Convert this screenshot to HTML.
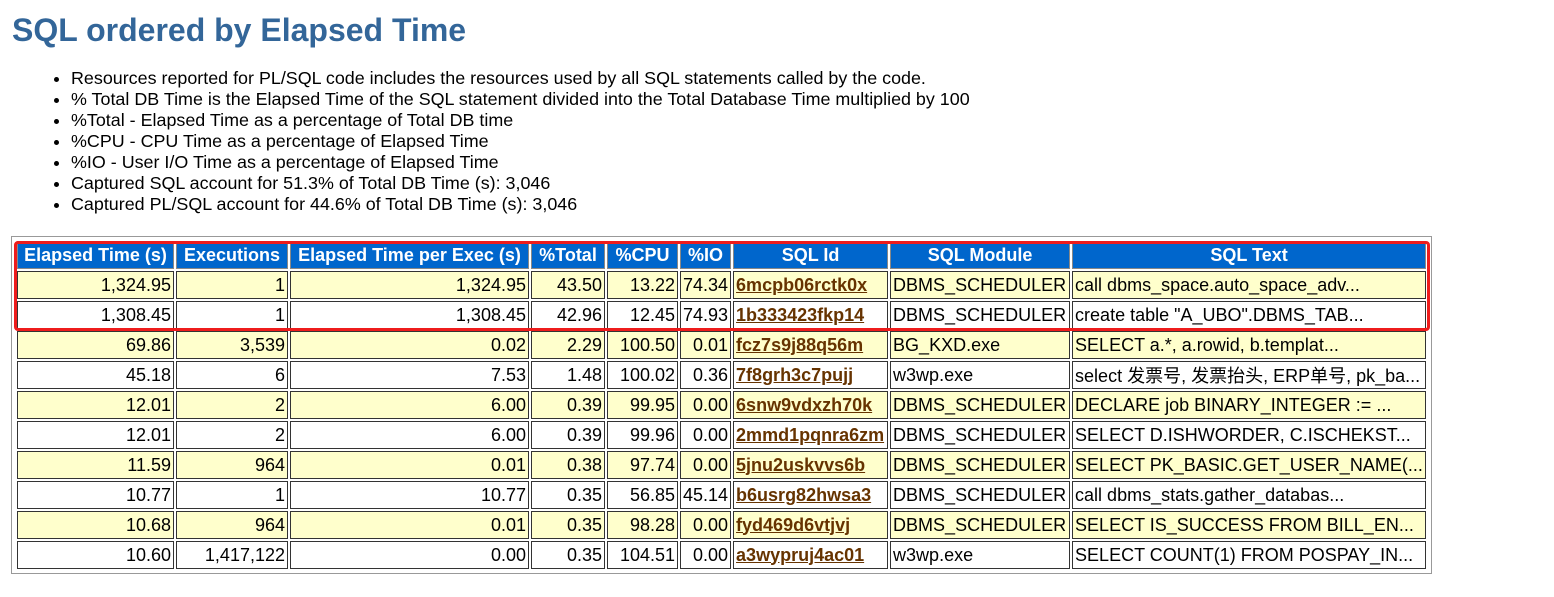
<!DOCTYPE html>
<html><head><meta charset="utf-8"><style>
body{margin:0;background:#fff;font-family:"Liberation Sans","Noto Sans CJK SC",Arial,sans-serif;width:1554px;height:597px;position:relative;overflow:hidden}
h1{position:absolute;left:12px;top:12px;margin:0;font-size:32px;font-weight:bold;color:#336699;white-space:nowrap}
ul{position:absolute;left:0;top:68px;margin:0;padding-left:71px;font-size:17.9px;line-height:21px;color:#000}
table{position:absolute;left:11px;top:236px;border:1px solid #999;border-collapse:separate;border-spacing:2px;padding:2px 3px;table-layout:fixed;font-size:18px}
td,th{border:1px solid #333;height:28px;padding:0 2px;white-space:nowrap;overflow:hidden;box-sizing:border-box}
th{background:#0066CC;color:#fff;font-weight:bold;text-align:center;border-color:#888}
td.n{text-align:right}
tr.a td{background:#FFFFCC}
a{color:#663300;font-weight:bold;text-decoration:underline}
.red{position:absolute;left:14px;top:241px;width:1410px;height:84px;border:3px solid #ee1c1c;border-radius:4px}
</style></head><body>
<h1>SQL ordered by Elapsed Time</h1>
<ul>
<li>Resources reported for PL/SQL code includes the resources used by all SQL statements called by the code.</li>
<li>% Total DB Time is the Elapsed Time of the SQL statement divided into the Total Database Time multiplied by 100</li>
<li>%Total - Elapsed Time as a percentage of Total DB time</li>
<li>%CPU - CPU Time as a percentage of Elapsed Time</li>
<li>%IO - User I/O Time as a percentage of Elapsed Time</li>
<li>Captured SQL account for 51.3% of Total DB Time (s): 3,046</li>
<li>Captured PL/SQL account for 44.6% of Total DB Time (s): 3,046</li>
</ul>
<table>
<colgroup><col style="width:157px"><col style="width:112px"><col style="width:239px"><col style="width:74px"><col style="width:71px"><col style="width:51px"><col style="width:155px"><col style="width:180px"><col style="width:354px"></colgroup>
<tr><th>Elapsed Time (s)</th><th>Executions</th><th>Elapsed Time per Exec (s)</th><th>%Total</th><th>%CPU</th><th>%IO</th><th>SQL Id</th><th>SQL Module</th><th>SQL Text</th></tr>
<tr class="a"><td class="n">1,324.95</td><td class="n">1</td><td class="n">1,324.95</td><td class="n">43.50</td><td class="n">13.22</td><td class="n">74.34</td><td><a>6mcpb06rctk0x</a></td><td>DBMS_SCHEDULER</td><td>call dbms_space.auto_space_adv...</td></tr>
<tr><td class="n">1,308.45</td><td class="n">1</td><td class="n">1,308.45</td><td class="n">42.96</td><td class="n">12.45</td><td class="n">74.93</td><td><a>1b333423fkp14</a></td><td>DBMS_SCHEDULER</td><td>create table "A_UBO".DBMS_TAB...</td></tr>
<tr class="a"><td class="n">69.86</td><td class="n">3,539</td><td class="n">0.02</td><td class="n">2.29</td><td class="n">100.50</td><td class="n">0.01</td><td><a>fcz7s9j88q56m</a></td><td>BG_KXD.exe</td><td>SELECT a.*, a.rowid, b.templat...</td></tr>
<tr><td class="n">45.18</td><td class="n">6</td><td class="n">7.53</td><td class="n">1.48</td><td class="n">100.02</td><td class="n">0.36</td><td><a>7f8grh3c7pujj</a></td><td>w3wp.exe</td><td>select 发票号, 发票抬头, ERP单号, pk_ba...</td></tr>
<tr class="a"><td class="n">12.01</td><td class="n">2</td><td class="n">6.00</td><td class="n">0.39</td><td class="n">99.95</td><td class="n">0.00</td><td><a>6snw9vdxzh70k</a></td><td>DBMS_SCHEDULER</td><td>DECLARE job BINARY_INTEGER := ...</td></tr>
<tr><td class="n">12.01</td><td class="n">2</td><td class="n">6.00</td><td class="n">0.39</td><td class="n">99.96</td><td class="n">0.00</td><td><a>2mmd1pqnra6zm</a></td><td>DBMS_SCHEDULER</td><td>SELECT D.ISHWORDER, C.ISCHEKST...</td></tr>
<tr class="a"><td class="n">11.59</td><td class="n">964</td><td class="n">0.01</td><td class="n">0.38</td><td class="n">97.74</td><td class="n">0.00</td><td><a>5jnu2uskvvs6b</a></td><td>DBMS_SCHEDULER</td><td>SELECT PK_BASIC.GET_USER_NAME(...</td></tr>
<tr><td class="n">10.77</td><td class="n">1</td><td class="n">10.77</td><td class="n">0.35</td><td class="n">56.85</td><td class="n">45.14</td><td><a>b6usrg82hwsa3</a></td><td>DBMS_SCHEDULER</td><td>call dbms_stats.gather_databas...</td></tr>
<tr class="a"><td class="n">10.68</td><td class="n">964</td><td class="n">0.01</td><td class="n">0.35</td><td class="n">98.28</td><td class="n">0.00</td><td><a>fyd469d6vtjvj</a></td><td>DBMS_SCHEDULER</td><td>SELECT IS_SUCCESS FROM BILL_EN...</td></tr>
<tr><td class="n">10.60</td><td class="n">1,417,122</td><td class="n">0.00</td><td class="n">0.35</td><td class="n">104.51</td><td class="n">0.00</td><td><a>a3wypruj4ac01</a></td><td>w3wp.exe</td><td>SELECT COUNT(1) FROM POSPAY_IN...</td></tr>
</table>
<div class="red"></div>
</body></html>
